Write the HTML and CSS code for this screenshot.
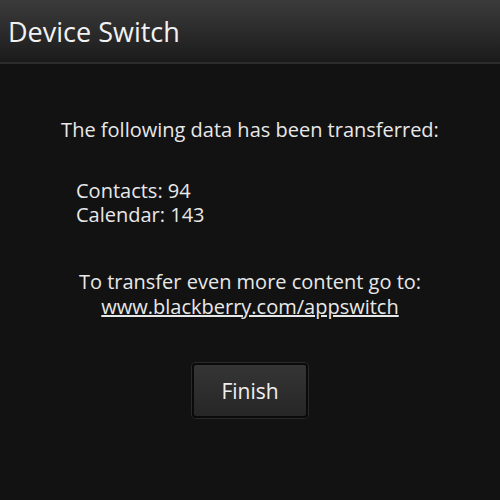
FILE: index.html
```html
<!DOCTYPE html>
<html lang="en">
<head>
  <meta charset="UTF-8">
  <meta name="viewport" content="width=device-width, initial-scale=1.0">
  <title>Device Switch</title>
  <link rel="stylesheet" href="styles.css">
</head>
<body>
  <header class="title-bar">
    <h1>Device Switch</h1>
  </header>
  <main class="content">
    <p class="intro">The following data has been transferred:</p>
    <ul class="counts">
      <li>Contacts: 94</li>
      <li>Calendar: 143</li>
    </ul>
    <p class="more">To transfer even more content go to:<br>
      <a href="#">www.blackberry.com/appswitch</a>
    </p>
    <div class="actions">
      <button class="finish">Finish</button>
    </div>
  </main>
</body>
</html>
```

FILE: styles.css
```css
body {
  margin: 0;
  width: 500px;
  height: 500px;
  background: #121212;
  color: #e8e8e8;
  font-family: 'Open Sans', 'Noto Sans', sans-serif;
  overflow: hidden;
}
.title-bar {
  height: 62px;
  background: linear-gradient(to bottom, #3b3b3b, #1b1b1b);
  border-bottom: 2px solid #2c2c2c;
  display: flex;
  align-items: center;
  padding-left: 8px;
}
.title-bar h1 {
  margin: 0;
  font-size: 27px;
  font-weight: normal;
  color: #f2f2f2;
}
.content {
  display: flex;
  flex-direction: column;
  align-items: center;
  padding-top: 54px;
  font-size: 20px;
  line-height: 24px;
}
.intro {
  margin: 0;
}
.counts {
  list-style: none;
  align-self: flex-start;
  margin: 37px 0 0 76px;
  padding: 0;
}
.more {
  margin: 42px 0 0;
  text-align: center;
  line-height: 25px;
}
.more a {
  color: #e8e8e8;
}
.actions {
  margin-top: 44px;
}
.finish {
  width: 116px;
  height: 55px;
  background: linear-gradient(to bottom, #353535, #262626);
  border: 2px solid #0a0a0a;
  border-radius: 4px;
  box-shadow: 0 0 0 1px #2a2a2a;
  color: #efefef;
  font-family: inherit;
  font-size: 21px;
}
```
